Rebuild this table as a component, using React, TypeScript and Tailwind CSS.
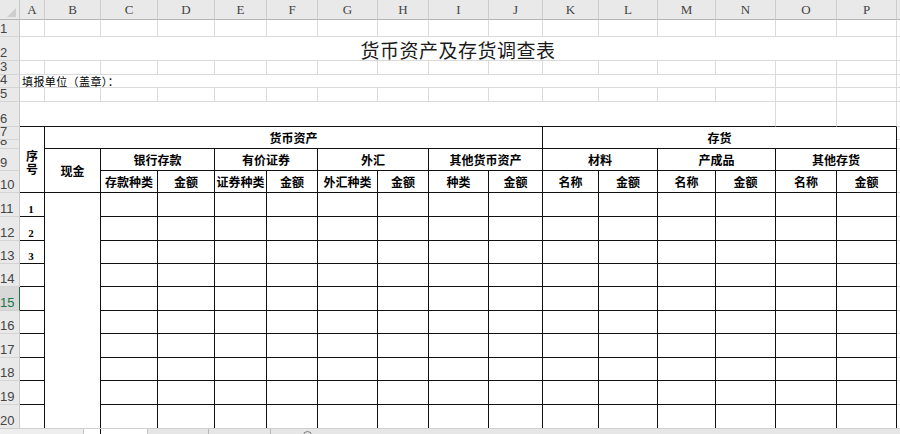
import React from "react";

const CS: Record<number, string> = {
  1: "",
  2: "col-span-2",
  6: "col-span-6",
  9: "col-span-9",
  14: "col-span-14",
  16: "col-span-16",
};
const RS: Record<number, string> = {
  1: "",
  2: "row-span-2",
  4: "row-span-4",
  10: "row-span-10",
};

type Kind = "plain" | "title" | "label" | "head" | "num" | "xuhao";
type Cell = { r: number; c: number; cs?: number; rs?: number; text?: string; kind?: Kind };

const LETTERS = ["A", "B", "C", "D", "E", "F", "G", "H", "I", "J", "K", "L", "M", "N", "O", "P", "Q"];

function buildCells(): Cell[][] {
  const rows: Cell[][] = [];
  for (let r = 1; r <= 20; r++) rows[r] = [];
  const full = (r: number) => {
    for (let c = 1; c <= 17; c++) rows[r].push({ r, c });
  };
  full(1);
  rows[2].push({ r: 2, c: 1, cs: 16, text: "货币资产及存货调查表", kind: "title" }, { r: 2, c: 17 });
  full(3);
  rows[4].push({ r: 4, c: 1, cs: 14, text: "填报单位（盖章）：", kind: "label" }, { r: 4, c: 15 }, { r: 4, c: 16 }, { r: 4, c: 17 });
  full(5);
  rows[6].push({ r: 6, c: 1, cs: 14 }, { r: 6, c: 15 }, { r: 6, c: 16 }, { r: 6, c: 17 });
  rows[7].push(
    { r: 7, c: 1, rs: 4, text: "序号", kind: "xuhao" },
    { r: 7, c: 2, cs: 9, rs: 2, text: "货币资产", kind: "head" },
    { r: 7, c: 11, cs: 6, rs: 2, text: "存货", kind: "head" },
    { r: 7, c: 17 }
  );
  rows[8].push({ r: 8, c: 17 });
  rows[9].push(
    { r: 9, c: 2, rs: 2, text: "现金", kind: "head" },
    { r: 9, c: 3, cs: 2, text: "银行存款", kind: "head" },
    { r: 9, c: 5, cs: 2, text: "有价证券", kind: "head" },
    { r: 9, c: 7, cs: 2, text: "外汇", kind: "head" },
    { r: 9, c: 9, cs: 2, text: "其他货币资产", kind: "head" },
    { r: 9, c: 11, cs: 2, text: "材料", kind: "head" },
    { r: 9, c: 13, cs: 2, text: "产成品", kind: "head" },
    { r: 9, c: 15, cs: 2, text: "其他存货", kind: "head" },
    { r: 9, c: 17 }
  );
  const sub = ["存款种类", "金额", "证券种类", "金额", "外汇种类", "金额", "种类", "金额", "名称", "金额", "名称", "金额", "名称", "金额"];
  sub.forEach((t, i) => rows[10].push({ r: 10, c: 3 + i, text: t, kind: "head" }));
  rows[10].push({ r: 10, c: 17 });
  for (let r = 11; r <= 20; r++) {
    const n = r - 10;
    rows[r].push({ r, c: 1, text: n <= 3 ? String(n) : undefined, kind: "num" });
    if (r === 11) rows[r].push({ r, c: 2, rs: 10 });
    for (let c = 3; c <= 17; c++) rows[r].push({ r, c });
  }
  return rows;
}

function cellClass(cell: Cell): string {
  const cs = cell.cs ?? 1;
  const rs = cell.rs ?? 1;
  const c1 = cell.c;
  const c2 = cell.c + cs - 1;
  const r1 = cell.r;
  const r2 = cell.r + rs - 1;
  const inCols = c1 >= 1 && c2 <= 16;
  const rightBlack = inCols && r2 >= 7 && r1 <= 20;
  const bottomBlack = inCols && r2 >= 6 && r2 <= 20;
  const parts = [
    "overflow-hidden border-r border-b bg-white",
    rightBlack ? "border-r-[#111111]" : "border-r-[#dadada]",
    bottomBlack ? "border-b-[#111111]" : "border-b-[#dadada]",
    CS[cs],
    RS[rs],
  ];
  switch (cell.kind) {
    case "title":
      parts.push("flex items-end justify-center text-[19px] leading-[21px] tracking-[0.5px] text-[#1a1a1a]");
      break;
    case "label":
      parts.push("flex items-end justify-start pl-[2px] text-[11px] leading-[12px] tracking-[0.4px] text-black");
      break;
    case "head":
      parts.push("flex items-center justify-center text-[12px] leading-none font-bold text-black whitespace-nowrap");
      break;
    case "xuhao":
      parts.push("flex flex-col items-center justify-center text-[12px] leading-[13px] font-bold text-black");
      break;
    case "num":
      parts.push("flex items-end justify-center pb-[1px] text-[11px] leading-none font-bold text-black");
      break;
  }
  return parts.filter(Boolean).join(" ");
}

function CellView({ cell }: { cell: Cell }) {
  if (cell.kind === "xuhao") {
    return (
      <div className={cellClass(cell)}>
        <span className="pt-[4px]">序</span>
        <span>号</span>
      </div>
    );
  }
  if (cell.kind === "num") {
    return (
      <div className={cellClass(cell)}>
        <span className="pr-[2px] font-['Liberation_Serif',serif]">{cell.text}</span>
      </div>
    );
  }
  return <div className={cellClass(cell)}>{cell.text}</div>;
}

function RowHeader({ n }: { n: number }) {
  const selected = n === 15;
  return (
    <div
      className={
        "overflow-hidden flex items-end border-b border-r font-['Liberation_Sans',sans-serif] text-[13px] leading-none " +
        (selected
          ? "bg-[#d8d8d8] text-[#217346] border-r-[#217346] border-b-[#cfcfcf]"
          : "bg-[#e9e9e9] text-[#444444] border-r-[#c8c8c8] border-b-[#d4d4d4]")
      }
    >
      <span className="pb-[1px]">{n}</span>
    </div>
  );
}

export default function App() {
  const rows = buildCells();
  return (
    <div className="w-[900px] h-[434px] overflow-hidden bg-white flex flex-col font-['Noto_Sans_CJK_SC',sans-serif]">
      <div className="h-[428px] shrink-0 overflow-hidden">
        <div className="grid w-max grid-cols-[20px_25px_56px_57px_57px_52px_51px_60px_51px_60px_54px_56px_59px_58px_60px_61px_60px_60px] grid-rows-[20px_17px_24px_14px_13px_14px_25px_13px_9px_22px_22px_24px_24px_23px_23px_24px_23px_24px_23px_24px_24px]">
          <div className="bg-[#e9e9e9] border-r border-b border-r-[#c8c8c8] border-b-[#b5b5b5] flex items-end justify-end">
            <svg width="19" height="19" viewBox="0 0 19 19">
              <polygon points="16,8 16,17 7,17" fill="#cdcdcd" />
            </svg>
          </div>
          {LETTERS.map((l) => (
            <div
              key={l}
              className="bg-[#e9e9e9] border-r border-b border-r-[#cdcdcd] border-b-[#b5b5b5] flex items-center justify-center font-['Liberation_Serif',serif] text-[13px] leading-none text-[#444444]"
            >
              {l}
            </div>
          ))}
          {rows.slice(1).map((cells, i) => (
            <React.Fragment key={i}>
              <RowHeader n={i + 1} />
              {cells.map((cell) => (
                <CellView key={`${cell.r}-${cell.c}`} cell={cell} />
              ))}
            </React.Fragment>
          ))}
        </div>
      </div>
      <div className="h-[6px] shrink-0 flex border-t border-[#cfcfcf] bg-[#e6e6e6]">
        <div className="w-[84px] bg-[#eeeeee] border-r border-[#c4c4c4]" />
        <div className="w-[63px] bg-white">
          <div className="ml-[16px] w-px h-full bg-[#111111]" />
        </div>
        <div className="flex-1 flex border-l border-[#c4c4c4]">
          <div className="w-[61px] border-r border-[#b8b8b8]" />
          <div className="w-[62px] border-r border-[#b8b8b8]" />
          <div className="ml-[32px] mt-[2px] w-[9px] h-[9px] rounded-full border border-[#777777]" />
        </div>
      </div>
    </div>
  );
}
